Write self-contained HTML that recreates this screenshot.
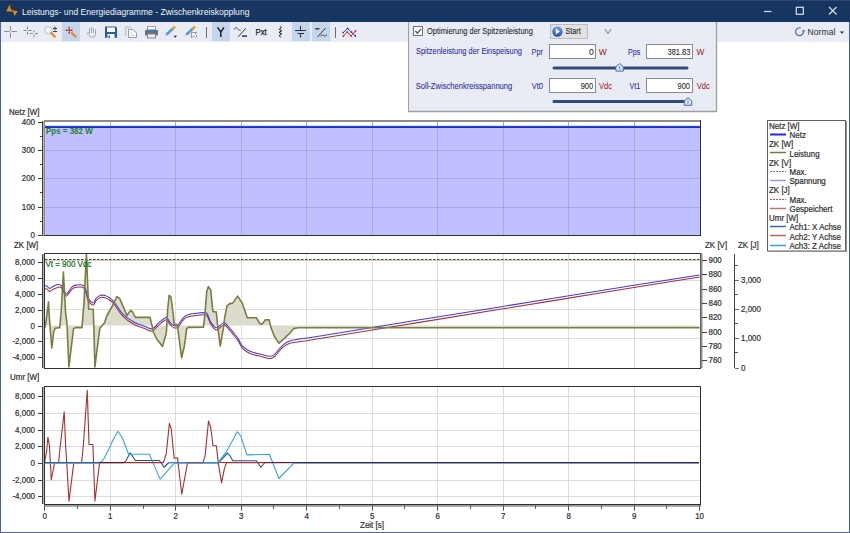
<!DOCTYPE html>
<html><head><meta charset="utf-8">
<style>
*{margin:0;padding:0}
html,body{width:850px;height:533px;overflow:hidden;background:#fff}
svg{position:absolute;left:0;top:0;display:block}
text{font-family:"Liberation Sans",sans-serif}
</style></head><body>
<svg width="850" height="533" viewBox="0 0 850 533">
<rect x="45" y="127" width="655" height="108" fill="#c0c0ff"/>
<line x1="110.5" y1="122" x2="110.5" y2="235" stroke="#a8a8e0" stroke-width="1"/>
<line x1="175.5" y1="122" x2="175.5" y2="235" stroke="#a8a8e0" stroke-width="1"/>
<line x1="241.5" y1="122" x2="241.5" y2="235" stroke="#a8a8e0" stroke-width="1"/>
<line x1="306.5" y1="122" x2="306.5" y2="235" stroke="#a8a8e0" stroke-width="1"/>
<line x1="372.5" y1="122" x2="372.5" y2="235" stroke="#a8a8e0" stroke-width="1"/>
<line x1="437.5" y1="122" x2="437.5" y2="235" stroke="#a8a8e0" stroke-width="1"/>
<line x1="503.5" y1="122" x2="503.5" y2="235" stroke="#a8a8e0" stroke-width="1"/>
<line x1="568.5" y1="122" x2="568.5" y2="235" stroke="#a8a8e0" stroke-width="1"/>
<line x1="634.5" y1="122" x2="634.5" y2="235" stroke="#a8a8e0" stroke-width="1"/>
<line x1="44" y1="207.5" x2="700" y2="207.5" stroke="#a8a8e0" stroke-width="1"/>
<line x1="44" y1="178.5" x2="700" y2="178.5" stroke="#a8a8e0" stroke-width="1"/>
<line x1="44" y1="150.5" x2="700" y2="150.5" stroke="#a8a8e0" stroke-width="1"/>
<line x1="110.5" y1="254" x2="110.5" y2="368" stroke="#dcdcdc" stroke-width="1"/>
<line x1="175.5" y1="254" x2="175.5" y2="368" stroke="#dcdcdc" stroke-width="1"/>
<line x1="241.5" y1="254" x2="241.5" y2="368" stroke="#dcdcdc" stroke-width="1"/>
<line x1="306.5" y1="254" x2="306.5" y2="368" stroke="#dcdcdc" stroke-width="1"/>
<line x1="372.5" y1="254" x2="372.5" y2="368" stroke="#dcdcdc" stroke-width="1"/>
<line x1="437.5" y1="254" x2="437.5" y2="368" stroke="#dcdcdc" stroke-width="1"/>
<line x1="503.5" y1="254" x2="503.5" y2="368" stroke="#dcdcdc" stroke-width="1"/>
<line x1="568.5" y1="254" x2="568.5" y2="368" stroke="#dcdcdc" stroke-width="1"/>
<line x1="634.5" y1="254" x2="634.5" y2="368" stroke="#dcdcdc" stroke-width="1"/>
<line x1="44" y1="338.5" x2="700" y2="338.5" stroke="#dcdcdc" stroke-width="1"/>
<line x1="44" y1="309.5" x2="700" y2="309.5" stroke="#dcdcdc" stroke-width="1"/>
<line x1="44" y1="280.5" x2="700" y2="280.5" stroke="#dcdcdc" stroke-width="1"/>
<line x1="110.5" y1="387" x2="110.5" y2="504" stroke="#dcdcdc" stroke-width="1"/>
<line x1="175.5" y1="387" x2="175.5" y2="504" stroke="#dcdcdc" stroke-width="1"/>
<line x1="241.5" y1="387" x2="241.5" y2="504" stroke="#dcdcdc" stroke-width="1"/>
<line x1="306.5" y1="387" x2="306.5" y2="504" stroke="#dcdcdc" stroke-width="1"/>
<line x1="372.5" y1="387" x2="372.5" y2="504" stroke="#dcdcdc" stroke-width="1"/>
<line x1="437.5" y1="387" x2="437.5" y2="504" stroke="#dcdcdc" stroke-width="1"/>
<line x1="503.5" y1="387" x2="503.5" y2="504" stroke="#dcdcdc" stroke-width="1"/>
<line x1="568.5" y1="387" x2="568.5" y2="504" stroke="#dcdcdc" stroke-width="1"/>
<line x1="634.5" y1="387" x2="634.5" y2="504" stroke="#dcdcdc" stroke-width="1"/>
<line x1="44" y1="496.5" x2="700" y2="496.5" stroke="#dcdcdc" stroke-width="1"/>
<line x1="44" y1="480.5" x2="700" y2="480.5" stroke="#dcdcdc" stroke-width="1"/>
<line x1="44" y1="446.5" x2="700" y2="446.5" stroke="#dcdcdc" stroke-width="1"/>
<line x1="44" y1="430.5" x2="700" y2="430.5" stroke="#dcdcdc" stroke-width="1"/>
<line x1="44" y1="413.5" x2="700" y2="413.5" stroke="#dcdcdc" stroke-width="1"/>
<line x1="44" y1="396.5" x2="700" y2="396.5" stroke="#dcdcdc" stroke-width="1"/>
<line x1="44" y1="127" x2="700" y2="127" stroke="#2424f0" stroke-width="2"/>
<line x1="45" y1="126" x2="700" y2="126" stroke="#40b840" stroke-width="0.9" stroke-dasharray="2,1.6"/>
<path d="M44.5,325.5 L44.60,328.30 L45.90,322.30 L48.10,305.30 L48.50,301.80 L49.20,315.80 L51.80,348.00 L53.80,331.50 L55.10,328.30 L59.70,327.60 L61.10,313.00 L63.40,272.10 L65.60,313.00 L66.90,322.30 L68.90,367.00 L73.50,328.90 L75.50,327.60 L82.00,327.60 L83.10,313.00 L84.00,302.60 L86.40,254.10 L88.40,302.00 L88.70,309.30 L93.20,309.20 L93.90,328.90 L94.90,367.00 L99.80,328.30 L104.50,322.80 L106.75,316.00 L112.40,305.90 L116.90,296.70 L119.70,298.60 L127.00,315.40 L130.40,310.40 L132.60,312.00 L135.40,317.40 L150.10,317.40 L151.80,324.60 L153.50,332.50 L156.90,339.25 L162.50,346.60 L166.40,332.50 L167.60,310.00 L169.20,295.20 L170.90,296.90 L173.10,313.75 L174.30,324.60 L177.10,324.60 L178.30,332.50 L181.60,357.80 L184.40,346.00 L186.70,328.60 L188.40,327.40 L203.40,327.30 L205.10,312.60 L206.75,291.25 L208.40,286.50 L210.70,290.10 L212.90,311.50 L216.30,312.10 L218.00,329.50 L220.25,346.00 L223.60,326.90 L224.75,317.10 L227.00,305.90 L229.80,303.60 L232.60,303.10 L237.70,296.10 L242.20,303.10 L247.30,317.70 L256.30,317.70 L260.20,323.90 L262.40,323.90 L265.30,319.90 L269.20,319.90 L270.70,326.90 L274.60,337.00 L279.10,343.20 L284.75,338.10 L290.40,332.50 L293.75,328.60 L298.25,327.80 L699.50,327.80 L699,325.5 Z" fill="#dcdccc"/>
<line x1="45" y1="260.5" x2="700" y2="260.5" stroke="#f0c0c0" stroke-width="1"/>
<line x1="45" y1="259.5" x2="700" y2="259.5" stroke="#1a5a1a" stroke-width="1.2" stroke-dasharray="2.5,1.5"/>
<path d="M44.50,289.20 C44.91,289.15 45.83,288.50 46.75,288.90 C47.67,289.30 48.58,291.26 49.60,291.40 C50.62,291.54 51.09,290.37 52.40,289.70 C53.71,289.03 55.39,288.13 56.90,287.70 C58.41,287.27 59.63,286.60 60.80,287.30 C61.97,288.00 62.43,290.02 63.40,291.60 C64.37,293.18 65.19,295.79 66.20,296.10 C67.21,296.41 67.88,294.61 69.00,293.30 C70.12,291.99 70.98,289.88 72.40,288.80 C73.82,287.72 75.08,287.57 76.90,287.30 C78.72,287.03 80.99,286.72 82.50,287.30 C84.01,287.88 84.29,288.21 85.30,290.50 C86.31,292.79 86.68,297.37 88.10,300.00 C89.52,302.63 91.78,304.99 93.20,305.10 C94.62,305.21 94.69,301.97 96.00,300.60 C97.31,299.23 98.88,298.00 100.50,297.50 C102.12,297.00 103.38,297.35 105.00,297.80 C106.62,298.25 107.88,298.88 109.50,300.00 C111.12,301.12 111.66,301.16 114.00,304.00 C116.34,306.84 118.94,312.16 122.50,315.80 C126.06,319.44 129.70,321.88 133.75,324.20 C137.80,326.52 141.66,327.48 145.00,328.70 C148.34,329.92 149.87,331.59 152.30,331.00 C154.73,330.41 156.00,327.42 158.50,325.40 C161.00,323.38 164.17,320.02 166.20,319.80 C168.23,319.58 168.45,322.80 169.80,324.20 C171.15,325.60 172.24,327.02 173.70,327.60 C175.16,328.18 176.27,328.68 177.90,327.40 C179.53,326.12 181.06,322.35 182.75,320.50 C184.44,318.65 184.86,318.02 187.30,317.10 C189.74,316.18 193.08,315.80 196.30,315.40 C199.52,315.00 203.18,314.70 205.20,314.90 C207.22,315.10 206.41,314.68 207.50,316.50 C208.59,318.32 209.56,322.57 211.25,325.00 C212.94,327.43 214.62,330.02 216.90,330.00 C219.18,329.98 221.67,324.92 223.90,324.90 C226.13,324.88 227.53,328.06 229.30,329.90 C231.07,331.74 232.13,333.08 233.75,335.10 C235.37,337.12 236.68,338.67 238.30,341.10 C239.92,343.53 240.54,346.33 242.75,348.60 C244.96,350.87 247.36,352.28 250.60,353.70 C253.84,355.12 257.31,355.64 260.75,356.50 C264.19,357.36 267.21,358.50 269.70,358.50 C272.19,358.50 272.30,358.48 274.60,356.50 C276.90,354.52 279.66,349.93 282.50,347.50 C285.34,345.07 286.35,344.17 290.40,343.00 C294.45,341.83 299.67,341.79 305.00,340.99 C310.33,340.20 302.90,341.35 320.00,338.57 C337.10,335.79 367.60,330.82 400.00,325.55 C432.40,320.28 464.00,315.15 500.00,309.30 C536.00,303.45 564.09,298.86 600.00,293.05 C635.91,287.24 681.59,279.89 699.50,277.00" fill="none" stroke="#a83030" stroke-width="1.05"/>
<path d="M44.50,286.20 C44.91,286.15 45.83,285.50 46.75,285.90 C47.67,286.30 48.58,288.26 49.60,288.40 C50.62,288.54 51.09,287.37 52.40,286.70 C53.71,286.03 55.39,284.99 56.90,284.70 C58.41,284.41 59.63,284.25 60.80,285.10 C61.97,285.95 62.43,287.82 63.40,289.40 C64.37,290.98 65.19,293.59 66.20,293.90 C67.21,294.21 67.88,292.41 69.00,291.10 C70.12,289.79 70.98,287.68 72.40,286.60 C73.82,285.52 75.08,285.37 76.90,285.10 C78.72,284.83 80.99,284.52 82.50,285.10 C84.01,285.68 84.29,286.01 85.30,288.30 C86.31,290.59 86.68,295.17 88.10,297.80 C89.52,300.43 91.78,302.79 93.20,302.90 C94.62,303.01 94.69,299.77 96.00,298.40 C97.31,297.03 98.88,295.80 100.50,295.30 C102.12,294.80 103.38,295.15 105.00,295.60 C106.62,296.05 107.88,296.68 109.50,297.80 C111.12,298.92 111.66,298.96 114.00,301.80 C116.34,304.64 118.94,309.96 122.50,313.60 C126.06,317.24 129.70,319.68 133.75,322.00 C137.80,324.32 141.66,325.28 145.00,326.50 C148.34,327.72 149.87,329.39 152.30,328.80 C154.73,328.21 156.00,325.22 158.50,323.20 C161.00,321.18 164.17,317.82 166.20,317.60 C168.23,317.38 168.45,320.60 169.80,322.00 C171.15,323.40 172.24,324.82 173.70,325.40 C175.16,325.98 176.27,326.48 177.90,325.20 C179.53,323.92 181.06,320.15 182.75,318.30 C184.44,316.45 184.86,315.82 187.30,314.90 C189.74,313.98 193.08,313.60 196.30,313.20 C199.52,312.80 203.18,312.50 205.20,312.70 C207.22,312.90 206.41,312.48 207.50,314.30 C208.59,316.12 209.56,320.37 211.25,322.80 C212.94,325.23 214.62,327.82 216.90,327.80 C219.18,327.78 221.67,322.72 223.90,322.70 C226.13,322.68 227.53,325.86 229.30,327.70 C231.07,329.54 232.13,330.88 233.75,332.90 C235.37,334.92 236.68,336.47 238.30,338.90 C239.92,341.33 240.54,344.13 242.75,346.40 C244.96,348.67 247.36,350.08 250.60,351.50 C253.84,352.92 257.31,353.44 260.75,354.30 C264.19,355.16 267.21,356.30 269.70,356.30 C272.19,356.30 272.30,356.28 274.60,354.30 C276.90,352.32 279.66,347.73 282.50,345.30 C285.34,342.87 286.35,342.06 290.40,340.80 C294.45,339.54 299.67,339.18 305.00,338.30 C310.33,337.42 302.90,338.65 320.00,335.90 C337.10,333.15 367.60,328.22 400.00,323.00 C432.40,317.78 464.00,312.70 500.00,306.90 C536.00,301.10 564.09,296.56 600.00,290.80 C635.91,285.04 681.59,277.76 699.50,274.90" fill="none" stroke="#3c3ce8" stroke-width="1.05"/>
<polyline points="44.60,328.30 45.90,322.30 48.10,305.30 48.50,301.80 49.20,315.80 51.80,348.00 53.80,331.50 55.10,328.30 59.70,327.60 61.10,313.00 63.40,272.10 65.60,313.00 66.90,322.30 68.90,367.00 73.50,328.90 75.50,327.60 82.00,327.60 83.10,313.00 84.00,302.60 86.40,254.10 88.40,302.00 88.70,309.30 93.20,309.20 93.90,328.90 94.90,367.00 99.80,328.30 104.50,322.80 106.75,316.00 112.40,305.90 116.90,296.70 119.70,298.60 127.00,315.40 130.40,310.40 132.60,312.00 135.40,317.40 150.10,317.40 151.80,324.60 153.50,332.50 156.90,339.25 162.50,346.60 166.40,332.50 167.60,310.00 169.20,295.20 170.90,296.90 173.10,313.75 174.30,324.60 177.10,324.60 178.30,332.50 181.60,357.80 184.40,346.00 186.70,328.60 188.40,327.40 203.40,327.30 205.10,312.60 206.75,291.25 208.40,286.50 210.70,290.10 212.90,311.50 216.30,312.10 218.00,329.50 220.25,346.00 223.60,326.90 224.75,317.10 227.00,305.90 229.80,303.60 232.60,303.10 237.70,296.10 242.20,303.10 247.30,317.70 256.30,317.70 260.20,323.90 262.40,323.90 265.30,319.90 269.20,319.90 270.70,326.90 274.60,337.00 279.10,343.20 284.75,338.10 290.40,332.50 293.75,328.60 298.25,327.80 699.50,327.80" fill="none" stroke="#7c7c42" stroke-width="1.6" stroke-linejoin="round"/>
<polyline points="44.50,462.60 124.10,462.60 125.75,461.10 130.25,452.85 135.30,460.50 159.50,460.50 164.00,467.25 168.50,462.75 218.60,462.60 227.60,453.00 230.00,455.80 232.80,460.70 256.40,460.70 260.90,467.25 264.90,462.50 699.00,462.60" fill="none" stroke="#24508c" stroke-width="1.1" stroke-linejoin="round"/>
<polyline points="44.50,462.60 46.50,452.00 47.90,437.20 49.50,446.00 51.25,479.75 54.60,462.90 58.60,462.60 60.25,446.00 64.20,411.90 65.65,446.00 66.40,457.25 69.00,501.10 73.75,462.90 81.60,462.60 83.30,446.00 87.25,390.30 89.00,444.50 92.90,444.50 94.90,501.10 99.60,462.60 163.40,462.60 166.25,453.75 169.40,423.40 171.30,429.00 174.10,458.25 177.50,457.70 181.75,494.10 187.60,462.50 202.90,462.60 205.10,455.90 208.50,421.00 210.75,427.75 213.00,445.75 216.40,445.75 218.20,462.60 221.55,482.90 224.25,469.40 226.50,462.60 699.00,462.60" fill="none" stroke="#a83030" stroke-width="1.1" stroke-linejoin="round"/>
<polyline points="44.50,463.30 98.50,463.30 101.50,461.80 104.10,458.40 108.60,449.40 113.00,440.00 117.90,431.25 122.40,438.00 128.60,454.30 149.40,454.30 160.10,479.10 174.10,463.30 217.50,463.30 226.50,451.40 237.30,431.80 240.70,435.75 246.90,454.90 269.40,454.30 278.90,478.50 293.60,463.30 699.00,463.30" fill="none" stroke="#3aa4e0" stroke-width="1.1" stroke-linejoin="round"/>
<line x1="98.5" y1="462.5" x2="124.1" y2="462.5" stroke="#5c1c2c" stroke-width="1"/>
<line x1="124.1" y1="462.5" x2="163.4" y2="462.5" stroke="#a83030" stroke-width="1"/>
<line x1="218.6" y1="462.5" x2="264.9" y2="462.5" stroke="#a83030" stroke-width="1"/>
<line x1="264.9" y1="462.5" x2="699.0" y2="462.5" stroke="#5a1c38" stroke-width="1"/>
<line x1="44" y1="121" x2="701" y2="121" stroke="#8c8c8c" stroke-width="2"/>
<line x1="44.5" y1="120" x2="44.5" y2="236" stroke="#8c8c8c" stroke-width="1"/>
<line x1="700.5" y1="120" x2="700.5" y2="236" stroke="#303030" stroke-width="1"/>
<line x1="44" y1="235.5" x2="701" y2="235.5" stroke="#303030" stroke-width="1"/>
<rect x="44.5" y="253.5" width="656" height="115" fill="none" stroke="#303030" stroke-width="1"/>
<rect x="44.5" y="386.5" width="656" height="118" fill="none" stroke="#303030" stroke-width="1"/>
<line x1="43.5" y1="121" x2="43.5" y2="236" stroke="#b4b4b4" stroke-width="1"/>
<line x1="42.5" y1="121" x2="42.5" y2="236" stroke="#404040" stroke-width="1"/>
<line x1="38" y1="235.5" x2="42" y2="235.5" stroke="#404040" stroke-width="1"/>
<line x1="38" y1="207.5" x2="42" y2="207.5" stroke="#404040" stroke-width="1"/>
<line x1="38" y1="178.5" x2="42" y2="178.5" stroke="#404040" stroke-width="1"/>
<line x1="38" y1="150.5" x2="42" y2="150.5" stroke="#404040" stroke-width="1"/>
<line x1="38" y1="122.5" x2="42" y2="122.5" stroke="#404040" stroke-width="1"/>
<line x1="40" y1="221.5" x2="42" y2="221.5" stroke="#404040" stroke-width="1"/>
<line x1="40" y1="192.5" x2="42" y2="192.5" stroke="#404040" stroke-width="1"/>
<line x1="40" y1="164.5" x2="42" y2="164.5" stroke="#404040" stroke-width="1"/>
<line x1="40" y1="136.5" x2="42" y2="136.5" stroke="#404040" stroke-width="1"/>
<line x1="43.5" y1="254" x2="43.5" y2="368" stroke="#b4b4b4" stroke-width="1"/>
<line x1="42.5" y1="254" x2="42.5" y2="368" stroke="#404040" stroke-width="1"/>
<line x1="38" y1="357.5" x2="42" y2="357.5" stroke="#404040" stroke-width="1"/>
<line x1="38" y1="341.5" x2="42" y2="341.5" stroke="#404040" stroke-width="1"/>
<line x1="38" y1="326.5" x2="42" y2="326.5" stroke="#404040" stroke-width="1"/>
<line x1="38" y1="310.5" x2="42" y2="310.5" stroke="#404040" stroke-width="1"/>
<line x1="38" y1="294.5" x2="42" y2="294.5" stroke="#404040" stroke-width="1"/>
<line x1="38" y1="278.5" x2="42" y2="278.5" stroke="#404040" stroke-width="1"/>
<line x1="38" y1="262.5" x2="42" y2="262.5" stroke="#404040" stroke-width="1"/>
<line x1="43.5" y1="387" x2="43.5" y2="504" stroke="#b4b4b4" stroke-width="1"/>
<line x1="42.5" y1="387" x2="42.5" y2="504" stroke="#404040" stroke-width="1"/>
<line x1="38" y1="496.5" x2="42" y2="496.5" stroke="#404040" stroke-width="1"/>
<line x1="38" y1="480.5" x2="42" y2="480.5" stroke="#404040" stroke-width="1"/>
<line x1="38" y1="463.5" x2="42" y2="463.5" stroke="#404040" stroke-width="1"/>
<line x1="38" y1="446.5" x2="42" y2="446.5" stroke="#404040" stroke-width="1"/>
<line x1="38" y1="430.5" x2="42" y2="430.5" stroke="#404040" stroke-width="1"/>
<line x1="38" y1="413.5" x2="42" y2="413.5" stroke="#404040" stroke-width="1"/>
<line x1="38" y1="396.5" x2="42" y2="396.5" stroke="#404040" stroke-width="1"/>
<line x1="701.5" y1="253" x2="701.5" y2="368" stroke="#909090" stroke-width="2"/>
<line x1="702" y1="360.5" x2="707" y2="360.5" stroke="#404040" stroke-width="1"/>
<line x1="702" y1="346.5" x2="707" y2="346.5" stroke="#404040" stroke-width="1"/>
<line x1="702" y1="332.5" x2="707" y2="332.5" stroke="#404040" stroke-width="1"/>
<line x1="702" y1="317.5" x2="707" y2="317.5" stroke="#404040" stroke-width="1"/>
<line x1="702" y1="303.5" x2="707" y2="303.5" stroke="#404040" stroke-width="1"/>
<line x1="702" y1="289.5" x2="707" y2="289.5" stroke="#404040" stroke-width="1"/>
<line x1="702" y1="274.5" x2="707" y2="274.5" stroke="#404040" stroke-width="1"/>
<line x1="702" y1="260.5" x2="707" y2="260.5" stroke="#404040" stroke-width="1"/>
<line x1="734.5" y1="254" x2="734.5" y2="368" stroke="#404040" stroke-width="1"/>
<line x1="735" y1="368.5" x2="739" y2="368.5" stroke="#707070" stroke-width="1"/>
<line x1="735" y1="338.5" x2="739" y2="338.5" stroke="#707070" stroke-width="1"/>
<line x1="735" y1="309.5" x2="739" y2="309.5" stroke="#707070" stroke-width="1"/>
<line x1="735" y1="280.5" x2="739" y2="280.5" stroke="#707070" stroke-width="1"/>
<line x1="735" y1="352.5" x2="738" y2="352.5" stroke="#505050" stroke-width="1"/>
<line x1="735" y1="323.5" x2="738" y2="323.5" stroke="#505050" stroke-width="1"/>
<line x1="735" y1="294.5" x2="738" y2="294.5" stroke="#505050" stroke-width="1"/>
<line x1="735" y1="265.5" x2="738" y2="265.5" stroke="#505050" stroke-width="1"/>
<line x1="44" y1="505.9" x2="701" y2="505.9" stroke="#9a9a9a" stroke-width="1.8"/>
<line x1="44.5" y1="505.5" x2="44.5" y2="510.7" stroke="#505050" stroke-width="1"/>
<line x1="110.5" y1="505.5" x2="110.5" y2="510.7" stroke="#505050" stroke-width="1"/>
<line x1="175.5" y1="505.5" x2="175.5" y2="510.7" stroke="#505050" stroke-width="1"/>
<line x1="241.5" y1="505.5" x2="241.5" y2="510.7" stroke="#505050" stroke-width="1"/>
<line x1="306.5" y1="505.5" x2="306.5" y2="510.7" stroke="#505050" stroke-width="1"/>
<line x1="372.5" y1="505.5" x2="372.5" y2="510.7" stroke="#505050" stroke-width="1"/>
<line x1="437.5" y1="505.5" x2="437.5" y2="510.7" stroke="#505050" stroke-width="1"/>
<line x1="503.5" y1="505.5" x2="503.5" y2="510.7" stroke="#505050" stroke-width="1"/>
<line x1="568.5" y1="505.5" x2="568.5" y2="510.7" stroke="#505050" stroke-width="1"/>
<line x1="634.5" y1="505.5" x2="634.5" y2="510.7" stroke="#505050" stroke-width="1"/>
<line x1="699.5" y1="505.5" x2="699.5" y2="510.7" stroke="#505050" stroke-width="1"/>
<line x1="77.5" y1="505.5" x2="77.5" y2="508.8" stroke="#505050" stroke-width="1"/>
<line x1="143.5" y1="505.5" x2="143.5" y2="508.8" stroke="#505050" stroke-width="1"/>
<line x1="208.5" y1="505.5" x2="208.5" y2="508.8" stroke="#505050" stroke-width="1"/>
<line x1="273.5" y1="505.5" x2="273.5" y2="508.8" stroke="#505050" stroke-width="1"/>
<line x1="339.5" y1="505.5" x2="339.5" y2="508.8" stroke="#505050" stroke-width="1"/>
<line x1="404.5" y1="505.5" x2="404.5" y2="508.8" stroke="#505050" stroke-width="1"/>
<line x1="470.5" y1="505.5" x2="470.5" y2="508.8" stroke="#505050" stroke-width="1"/>
<line x1="535.5" y1="505.5" x2="535.5" y2="508.8" stroke="#505050" stroke-width="1"/>
<line x1="601.5" y1="505.5" x2="601.5" y2="508.8" stroke="#505050" stroke-width="1"/>
<line x1="666.5" y1="505.5" x2="666.5" y2="508.8" stroke="#505050" stroke-width="1"/>
<rect x="767.5" y="120.5" width="78" height="130.5" fill="#ffffff" stroke="#606060" stroke-width="1"/>
<line x1="846.5" y1="121" x2="846.5" y2="252" stroke="#909090" stroke-width="1"/>
<line x1="768" y1="251.5" x2="847" y2="251.5" stroke="#909090" stroke-width="1"/>
<line x1="770" y1="134.5" x2="786" y2="134.5" stroke="#2020ff" stroke-width="2"/>
<line x1="770" y1="152.5" x2="786" y2="152.5" stroke="#7a7a40" stroke-width="1.5"/>
<line x1="770" y1="171.5" x2="786" y2="171.5" stroke="#6a6ae8" stroke-width="1" stroke-dasharray="2,1"/>
<line x1="770" y1="180.5" x2="786" y2="180.5" stroke="#9a9ae8" stroke-width="1.5"/>
<line x1="770" y1="199.5" x2="786" y2="199.5" stroke="#c05050" stroke-width="1" stroke-dasharray="2,1"/>
<line x1="770" y1="208.5" x2="786" y2="208.5" stroke="#c07070" stroke-width="1.5"/>
<line x1="770" y1="226.5" x2="786" y2="226.5" stroke="#3a68a8" stroke-width="1.5"/>
<line x1="770" y1="235.5" x2="786" y2="235.5" stroke="#c06060" stroke-width="1.5"/>
<line x1="770" y1="245.5" x2="786" y2="245.5" stroke="#3aa0dc" stroke-width="1.5"/>
<text transform="translate(9.00,114.80) scale(0.96,1)" text-anchor="start" fill="#303030" font-size="8.3" font-weight="normal" stroke="#303030" stroke-width="0.22" >Netz [W]</text>
<text transform="translate(35.00,238.00) scale(0.96,1)" text-anchor="end" fill="#303030" font-size="8.3" font-weight="normal" stroke="#303030" stroke-width="0.22" >0</text>
<text transform="translate(35.00,209.65) scale(0.96,1)" text-anchor="end" fill="#303030" font-size="8.3" font-weight="normal" stroke="#303030" stroke-width="0.22" >100</text>
<text transform="translate(35.00,181.30) scale(0.96,1)" text-anchor="end" fill="#303030" font-size="8.3" font-weight="normal" stroke="#303030" stroke-width="0.22" >200</text>
<text transform="translate(35.00,152.95) scale(0.96,1)" text-anchor="end" fill="#303030" font-size="8.3" font-weight="normal" stroke="#303030" stroke-width="0.22" >300</text>
<text transform="translate(35.00,124.60) scale(0.96,1)" text-anchor="end" fill="#303030" font-size="8.3" font-weight="normal" stroke="#303030" stroke-width="0.22" >400</text>
<text transform="translate(14.00,248.00) scale(0.96,1)" text-anchor="start" fill="#303030" font-size="8.3" font-weight="normal" stroke="#303030" stroke-width="0.22" >ZK [W]</text>
<text transform="translate(35.00,360.30) scale(0.96,1)" text-anchor="end" fill="#303030" font-size="8.3" font-weight="normal" stroke="#303030" stroke-width="0.22" >-4,000</text>
<text transform="translate(35.00,344.40) scale(0.96,1)" text-anchor="end" fill="#303030" font-size="8.3" font-weight="normal" stroke="#303030" stroke-width="0.22" >-2,000</text>
<text transform="translate(35.00,328.50) scale(0.96,1)" text-anchor="end" fill="#303030" font-size="8.3" font-weight="normal" stroke="#303030" stroke-width="0.22" >0</text>
<text transform="translate(35.00,312.60) scale(0.96,1)" text-anchor="end" fill="#303030" font-size="8.3" font-weight="normal" stroke="#303030" stroke-width="0.22" >2,000</text>
<text transform="translate(35.00,296.70) scale(0.96,1)" text-anchor="end" fill="#303030" font-size="8.3" font-weight="normal" stroke="#303030" stroke-width="0.22" >4,000</text>
<text transform="translate(35.00,280.80) scale(0.96,1)" text-anchor="end" fill="#303030" font-size="8.3" font-weight="normal" stroke="#303030" stroke-width="0.22" >6,000</text>
<text transform="translate(35.00,264.90) scale(0.96,1)" text-anchor="end" fill="#303030" font-size="8.3" font-weight="normal" stroke="#303030" stroke-width="0.22" >8,000</text>
<text transform="translate(705.00,247.80) scale(0.96,1)" text-anchor="start" fill="#303030" font-size="8.3" font-weight="normal" stroke="#303030" stroke-width="0.22" >ZK [V]</text>
<text transform="translate(738.00,247.80) scale(0.96,1)" text-anchor="start" fill="#303030" font-size="8.3" font-weight="normal" stroke="#303030" stroke-width="0.22" >ZK [J]</text>
<text transform="translate(708.50,363.10) scale(0.96,1)" text-anchor="start" fill="#303030" font-size="8.3" font-weight="normal" stroke="#303030" stroke-width="0.22" >760</text>
<text transform="translate(708.50,348.80) scale(0.96,1)" text-anchor="start" fill="#303030" font-size="8.3" font-weight="normal" stroke="#303030" stroke-width="0.22" >780</text>
<text transform="translate(708.50,334.50) scale(0.96,1)" text-anchor="start" fill="#303030" font-size="8.3" font-weight="normal" stroke="#303030" stroke-width="0.22" >800</text>
<text transform="translate(708.50,320.20) scale(0.96,1)" text-anchor="start" fill="#303030" font-size="8.3" font-weight="normal" stroke="#303030" stroke-width="0.22" >820</text>
<text transform="translate(708.50,305.90) scale(0.96,1)" text-anchor="start" fill="#303030" font-size="8.3" font-weight="normal" stroke="#303030" stroke-width="0.22" >840</text>
<text transform="translate(708.50,291.60) scale(0.96,1)" text-anchor="start" fill="#303030" font-size="8.3" font-weight="normal" stroke="#303030" stroke-width="0.22" >860</text>
<text transform="translate(708.50,277.30) scale(0.96,1)" text-anchor="start" fill="#303030" font-size="8.3" font-weight="normal" stroke="#303030" stroke-width="0.22" >880</text>
<text transform="translate(708.50,263.00) scale(0.96,1)" text-anchor="start" fill="#303030" font-size="8.3" font-weight="normal" stroke="#303030" stroke-width="0.22" >900</text>
<text transform="translate(741.00,370.50) scale(0.96,1)" text-anchor="start" fill="#303030" font-size="8.3" font-weight="normal" stroke="#303030" stroke-width="0.22" >0</text>
<text transform="translate(741.00,341.40) scale(0.96,1)" text-anchor="start" fill="#303030" font-size="8.3" font-weight="normal" stroke="#303030" stroke-width="0.22" >1,000</text>
<text transform="translate(741.00,312.30) scale(0.96,1)" text-anchor="start" fill="#303030" font-size="8.3" font-weight="normal" stroke="#303030" stroke-width="0.22" >2,000</text>
<text transform="translate(741.00,283.20) scale(0.96,1)" text-anchor="start" fill="#303030" font-size="8.3" font-weight="normal" stroke="#303030" stroke-width="0.22" >3,000</text>
<text transform="translate(10.00,380.30) scale(0.96,1)" text-anchor="start" fill="#303030" font-size="8.3" font-weight="normal" stroke="#303030" stroke-width="0.22" >Umr [W]</text>
<text transform="translate(35.00,499.30) scale(0.96,1)" text-anchor="end" fill="#303030" font-size="8.3" font-weight="normal" stroke="#303030" stroke-width="0.22" >-4,000</text>
<text transform="translate(35.00,482.65) scale(0.96,1)" text-anchor="end" fill="#303030" font-size="8.3" font-weight="normal" stroke="#303030" stroke-width="0.22" >-2,000</text>
<text transform="translate(35.00,466.00) scale(0.96,1)" text-anchor="end" fill="#303030" font-size="8.3" font-weight="normal" stroke="#303030" stroke-width="0.22" >0</text>
<text transform="translate(35.00,449.35) scale(0.96,1)" text-anchor="end" fill="#303030" font-size="8.3" font-weight="normal" stroke="#303030" stroke-width="0.22" >2,000</text>
<text transform="translate(35.00,432.70) scale(0.96,1)" text-anchor="end" fill="#303030" font-size="8.3" font-weight="normal" stroke="#303030" stroke-width="0.22" >4,000</text>
<text transform="translate(35.00,416.05) scale(0.96,1)" text-anchor="end" fill="#303030" font-size="8.3" font-weight="normal" stroke="#303030" stroke-width="0.22" >6,000</text>
<text transform="translate(35.00,399.40) scale(0.96,1)" text-anchor="end" fill="#303030" font-size="8.3" font-weight="normal" stroke="#303030" stroke-width="0.22" >8,000</text>
<text transform="translate(44.80,518.80) scale(0.96,1)" text-anchor="middle" fill="#303030" font-size="8.3" font-weight="normal" stroke="#303030" stroke-width="0.22" >0</text>
<text transform="translate(110.28,518.80) scale(0.96,1)" text-anchor="middle" fill="#303030" font-size="8.3" font-weight="normal" stroke="#303030" stroke-width="0.22" >1</text>
<text transform="translate(175.76,518.80) scale(0.96,1)" text-anchor="middle" fill="#303030" font-size="8.3" font-weight="normal" stroke="#303030" stroke-width="0.22" >2</text>
<text transform="translate(241.24,518.80) scale(0.96,1)" text-anchor="middle" fill="#303030" font-size="8.3" font-weight="normal" stroke="#303030" stroke-width="0.22" >3</text>
<text transform="translate(306.72,518.80) scale(0.96,1)" text-anchor="middle" fill="#303030" font-size="8.3" font-weight="normal" stroke="#303030" stroke-width="0.22" >4</text>
<text transform="translate(372.20,518.80) scale(0.96,1)" text-anchor="middle" fill="#303030" font-size="8.3" font-weight="normal" stroke="#303030" stroke-width="0.22" >5</text>
<text transform="translate(437.68,518.80) scale(0.96,1)" text-anchor="middle" fill="#303030" font-size="8.3" font-weight="normal" stroke="#303030" stroke-width="0.22" >6</text>
<text transform="translate(503.16,518.80) scale(0.96,1)" text-anchor="middle" fill="#303030" font-size="8.3" font-weight="normal" stroke="#303030" stroke-width="0.22" >7</text>
<text transform="translate(568.64,518.80) scale(0.96,1)" text-anchor="middle" fill="#303030" font-size="8.3" font-weight="normal" stroke="#303030" stroke-width="0.22" >8</text>
<text transform="translate(634.12,518.80) scale(0.96,1)" text-anchor="middle" fill="#303030" font-size="8.3" font-weight="normal" stroke="#303030" stroke-width="0.22" >9</text>
<text transform="translate(699.60,518.80) scale(0.96,1)" text-anchor="middle" fill="#303030" font-size="8.3" font-weight="normal" stroke="#303030" stroke-width="0.22" >10</text>
<text transform="translate(372.00,528.30) scale(0.96,1)" text-anchor="middle" fill="#303030" font-size="8.3" font-weight="normal" stroke="#303030" stroke-width="0.22" >Zeit [s]</text>
<text transform="translate(46.00,134.00) scale(0.96,1)" text-anchor="start" fill="#1f821f" font-size="8.3" font-weight="bold" >Pps = 382 W</text>
<text transform="translate(45.50,266.80) scale(0.96,1)" text-anchor="start" fill="#06701e" font-size="8.3" font-weight="normal" stroke="#06701e" stroke-width="0.22" >Vt = 900 Vdc</text>
<text transform="translate(769.00,128.90) scale(0.96,1)" text-anchor="start" fill="#303030" font-size="8.3" font-weight="normal" stroke="#303030" stroke-width="0.22" >Netz [W]</text>
<text transform="translate(789.50,138.12) scale(0.96,1)" text-anchor="start" fill="#303030" font-size="8.3" font-weight="normal" stroke="#303030" stroke-width="0.22" >Netz</text>
<text transform="translate(769.00,147.34) scale(0.96,1)" text-anchor="start" fill="#303030" font-size="8.3" font-weight="normal" stroke="#303030" stroke-width="0.22" >ZK [W]</text>
<text transform="translate(789.50,156.56) scale(0.96,1)" text-anchor="start" fill="#303030" font-size="8.3" font-weight="normal" stroke="#303030" stroke-width="0.22" >Leistung</text>
<text transform="translate(769.00,165.78) scale(0.96,1)" text-anchor="start" fill="#303030" font-size="8.3" font-weight="normal" stroke="#303030" stroke-width="0.22" >ZK [V]</text>
<text transform="translate(789.50,175.00) scale(0.96,1)" text-anchor="start" fill="#303030" font-size="8.3" font-weight="normal" stroke="#303030" stroke-width="0.22" >Max.</text>
<text transform="translate(789.50,184.22) scale(0.96,1)" text-anchor="start" fill="#303030" font-size="8.3" font-weight="normal" stroke="#303030" stroke-width="0.22" >Spannung</text>
<text transform="translate(769.00,193.44) scale(0.96,1)" text-anchor="start" fill="#303030" font-size="8.3" font-weight="normal" stroke="#303030" stroke-width="0.22" >ZK [J]</text>
<text transform="translate(789.50,202.66) scale(0.96,1)" text-anchor="start" fill="#303030" font-size="8.3" font-weight="normal" stroke="#303030" stroke-width="0.22" >Max.</text>
<text transform="translate(789.50,211.88) scale(0.96,1)" text-anchor="start" fill="#303030" font-size="8.3" font-weight="normal" stroke="#303030" stroke-width="0.22" >Gespeichert</text>
<text transform="translate(769.00,221.10) scale(0.96,1)" text-anchor="start" fill="#303030" font-size="8.3" font-weight="normal" stroke="#303030" stroke-width="0.22" >Umr [W]</text>
<text transform="translate(789.50,230.32) scale(0.96,1)" text-anchor="start" fill="#303030" font-size="8.3" font-weight="normal" stroke="#303030" stroke-width="0.22" >Ach1: X Achse</text>
<text transform="translate(789.50,239.54) scale(0.96,1)" text-anchor="start" fill="#303030" font-size="8.3" font-weight="normal" stroke="#303030" stroke-width="0.22" >Ach2: Y Achse</text>
<text transform="translate(789.50,248.76) scale(0.96,1)" text-anchor="start" fill="#303030" font-size="8.3" font-weight="normal" stroke="#303030" stroke-width="0.22" >Ach3: Z Achse</text>
<rect x="0" y="0" width="850" height="22" fill="#163560"/>
<rect x="0" y="0" width="850" height="1" fill="#2f4670"/>
<path d="M9.5,5 C10.3,5 10.5,6.5 10.3,7.8 L11,9.6 L13.2,10.4 L17.8,10.9 L14.5,15.9 L13,11.4 L6.2,11.4 Z" fill="#e08c12"/>
<text x="22" y="14.5" font-size="9.3" fill="#f2f5fa" textLength="227.4" lengthAdjust="spacingAndGlyphs">Leistungs- und Energiediagramme - Zwischenkreiskopplung</text>
<line x1="764" y1="11.5" x2="771.5" y2="11.5" stroke="#dde2ea" stroke-width="1.2"/>
<rect x="796.3" y="7.3" width="7" height="7" fill="none" stroke="#dde2ea" stroke-width="1.2"/>
<path d="M829,7 L836.5,14.5 M836.5,7 L829,14.5" stroke="#dde2ea" stroke-width="1.1"/>
<rect x="0" y="22" width="850" height="20" fill="#e9ecf5"/>
<rect x="62" y="22" width="18" height="19" fill="#c5d5ec"/>
<rect x="212" y="22" width="18" height="19" fill="#c5d5ec"/>
<rect x="292" y="22" width="18" height="19" fill="#c5d5ec"/>
<rect x="312" y="22" width="18" height="19" fill="#c5d5ec"/>
<path d="M4,31.5 H9.5 M11.5,31.5 H17 M10.5,26 V31 M10.5,32.5 V38" stroke="#909090" stroke-width="1"/>
<path d="M23.5,30.5 H26.5 M28.5,30.5 H31.5 M27.5,26.5 V29.5 M27.5,31.5 V34.5" stroke="#808080" stroke-width="1"/>
<path d="M30,33.5 H33 M35,33.5 H38 M34,30 V32.5 M34,34.5 V37.5" stroke="#909090" stroke-width="1"/>
<circle cx="48.4" cy="30.3" r="3.7" fill="#f4f4f4" stroke="#a8c0e0" stroke-width="1"/>
<line x1="51" y1="33" x2="54.8" y2="36.8" stroke="#e88a20" stroke-width="2.2" stroke-linecap="round"/>
<path d="M53,28.5 H57 M55,26.5 V30.5 M53,31.5 H57" stroke="#404040" stroke-width="1"/>
<circle cx="69.2" cy="30.3" r="3.7" fill="#f4f4f4" stroke="#a8c0e0" stroke-width="1"/>
<line x1="71.8" y1="33" x2="75.6" y2="36.8" stroke="#e88a20" stroke-width="2.2" stroke-linecap="round"/>
<path d="M66.3,30.3 H72.1 M69.2,27.6 V33" stroke="#a82020" stroke-width="1"/>
<path d="M65.6,30.3 L67.3,29 L67.3,31.6Z M72.8,30.3 L71.1,29 L71.1,31.6Z M69.2,26.8 L68,28.4 L70.4,28.4Z M69.2,33.8 L68,32.2 L70.4,32.2Z" fill="#a82020"/>
<path d="M87,33.5 L89,35.5 L90.5,37 L94.5,37 L95.5,34 L95.5,30 M89.5,34.5 L89.5,28 M91.5,33 L91.5,27 M93.5,33 L93.5,28 M95.5,33 L95.5,29.5 M87,33.5 L88.3,32.5 L89.5,33.5" fill="none" stroke="#a0a0a0" stroke-width="0.9"/>
<path d="M105,26.5 H116 L117,27.5 V37.8 H105Z" fill="#2c5aa8"/>
<rect x="107" y="27.5" width="8" height="4.5" fill="#ffffff"/>
<rect x="107.5" y="34" width="7" height="3.8" fill="#ffffff"/>
<rect x="108.5" y="35.5" width="1.5" height="2.3" fill="#2c5aa8"/>
<path d="M125.7,27 H130 L131.5,28.5 M125.7,27 V36" fill="none" stroke="#b8b8b8" stroke-width="1"/>
<path d="M128.5,29.5 H133 L136.5,33 V37.5 H128.5Z" fill="#ffffff" stroke="#9a9a9a" stroke-width="1"/>
<path d="M130.5,33 H132 M130.5,35.3 H134.5" stroke="#b0b8d0" stroke-width="0.8"/>
<rect x="147.5" y="26.5" width="8" height="4" fill="#ffffff" stroke="#a0a0a0" stroke-width="1"/>
<rect x="145" y="30" width="13" height="5.5" rx="1" fill="#6e6e6e"/>
<rect x="147" y="29.5" width="9" height="2" fill="#3a78c0"/>
<rect x="147.5" y="34" width="8" height="4" fill="#e4eef8" stroke="#8a8a8a" stroke-width="1"/>
<line x1="166.5" y1="34.5" x2="173" y2="28.5" stroke="#4a9ee0" stroke-width="2.6"/>
<line x1="173" y1="28.5" x2="174.3" y2="27.3" stroke="#e8a020" stroke-width="2.6" stroke-linecap="round"/>
<path d="M165.2,35.8 L166,33.6 L167.4,35Z" fill="#a0a0a0"/>
<path d="M173.5,35.8 H177 L175.25,37.8Z" fill="#202020"/>
<line x1="186.5" y1="34.5" x2="193" y2="28.5" stroke="#4a9ee0" stroke-width="2.6"/>
<line x1="193" y1="28.5" x2="194.3" y2="27.3" stroke="#e8a020" stroke-width="2.6" stroke-linecap="round"/>
<path d="M185.2,35.8 L186,33.6 L187.4,35Z" fill="#a0a0a0"/>
<path d="M191.5,32.5 H196.5 L195.3,34.2 L197,36 L195.5,37.5 L193.8,35.8 L191.5,37.5Z" fill="#ffffff" stroke="#808080" stroke-width="0.8"/>
<line x1="206.5" y1="27" x2="206.5" y2="38" stroke="#6a6a6a" stroke-width="1"/>
<line x1="335.5" y1="27" x2="335.5" y2="38" stroke="#6a6a6a" stroke-width="1"/>
<path d="M217.5,27.3 L220.8,32 L224,27.3 M220.8,32 V37" fill="none" stroke="#1a1a1a" stroke-width="1.4"/>
<path d="M234.2,29.6 L236,27.3 L238.3,29.6 L240.6,30.6" fill="none" stroke="#505050" stroke-width="1"/>
<line x1="238.3" y1="36.8" x2="245.6" y2="28.4" stroke="#404040" stroke-width="1"/>
<rect x="242" y="35.2" width="5" height="1.8" fill="#505050"/>
<text x="255.5" y="35.1" font-size="9" fill="#1a1a1a" stroke="#1a1a1a" stroke-width="0.25" textLength="11.3" lengthAdjust="spacingAndGlyphs">Pxt</text>
<path d="M280.3,26.3 L281.3,27.8 L279.2,29.3 L281.8,30.8 L279,32.3 L281.8,33.8 L279.2,35.3 L280.6,37.5" fill="none" stroke="#202020" stroke-width="1"/>
<path d="M295,30.5 H306 M297.5,33.5 H304 M300.5,26.2 V30.5 M300.5,33.5 V37.5" stroke="#303030" stroke-width="1.1"/>
<rect x="315.2" y="28" width="4.2" height="1.5" fill="#404040"/>
<line x1="317.5" y1="37" x2="325.6" y2="28" stroke="#404040" stroke-width="1"/>
<path d="M320.5,36 Q322,34 323.5,35.5 Q325,37 327,34.5" fill="none" stroke="#505050" stroke-width="1"/>
<polyline points="343.2,32.6 347.6,28.4 351.5,32.2 355.3,36" fill="none" stroke="#2c3aa8" stroke-width="1"/>
<polyline points="343.4,36 347.2,31.9 351.1,36 355.6,30.9" fill="none" stroke="#e02828" stroke-width="1"/>
<circle cx="343.2" cy="32.6" r="0.9" fill="#2c3aa8"/>
<circle cx="347.6" cy="28.4" r="0.9" fill="#2c3aa8"/>
<circle cx="351.5" cy="32.2" r="0.9" fill="#2c3aa8"/>
<circle cx="355.3" cy="36" r="0.9" fill="#2c3aa8"/>
<circle cx="343.4" cy="36" r="0.9" fill="#e02828"/>
<circle cx="347.2" cy="31.9" r="0.9" fill="#e02828"/>
<circle cx="351.1" cy="36" r="0.9" fill="#e02828"/>
<circle cx="355.6" cy="30.9" r="0.9" fill="#e02828"/>
<path d="M800.8,28 A3.9,3.9 0 1 0 803.4,32" fill="none" stroke="#4a6a9a" stroke-width="1.2"/>
<path d="M801.8,30.2 L805.2,30.2 L803.5,32.8Z" fill="#4a6a9a"/>
<text x="807.6" y="35.2" font-size="9" fill="#303030" textLength="27.8" lengthAdjust="spacingAndGlyphs">Normal</text>
<path d="M840,31.5 H844 L842,33.7Z" fill="#202020"/>
<rect x="408" y="22" width="309" height="90" fill="#e9ecf5"/>
<line x1="408.5" y1="22" x2="408.5" y2="112" stroke="#a0a0a0" stroke-width="1"/>
<line x1="716.5" y1="22" x2="716.5" y2="112" stroke="#a0a0a0" stroke-width="1.3"/>
<line x1="408" y1="111.5" x2="717" y2="111.5" stroke="#a0a0a0" stroke-width="1.3"/>
<rect x="413.5" y="26.5" width="9" height="9" fill="#ffffff" stroke="#707070" stroke-width="1"/>
<path d="M415.3,31 L417.5,33.3 L421,28.8" fill="none" stroke="#555555" stroke-width="1.3"/>
<text x="427.0" y="33.9" font-size="8.7" fill="#1e1e1e" stroke="#1e1e1e" stroke-width="0.08" textLength="105.8" lengthAdjust="spacingAndGlyphs">Optimierung der Spitzenleistung</text>
<rect x="550.5" y="24.5" width="37" height="14" fill="#e1e1e1" stroke="#bdbdbd" stroke-width="1"/>
<defs><linearGradient id="pg" x1="0" y1="0" x2="0" y2="1"><stop offset="0" stop-color="#7aa4ec"/><stop offset="1" stop-color="#2248a8"/></linearGradient></defs>
<circle cx="557.4" cy="31.5" r="5.2" fill="url(#pg)"/>
<path d="M555.8,28.6 L560,31.5 L555.8,34.4Z" fill="#ffffff"/>
<text x="565.5" y="34.4" font-size="8.7" fill="#1e1e1e" stroke="#1e1e1e" stroke-width="0.08" textLength="15.2" lengthAdjust="spacingAndGlyphs">Start</text>
<path d="M605,29 L608,33.8 L611,29" fill="none" stroke="#707070" stroke-width="0.9"/>
<text x="416.0" y="54.1" font-size="8.7" fill="#2e2ea0" stroke="#2e2ea0" stroke-width="0.08" textLength="106.0" lengthAdjust="spacingAndGlyphs">Spitzenleistung der Einspeisung</text>
<text x="531.6" y="55.0" font-size="8.7" fill="#2e2ea0" stroke="#2e2ea0" stroke-width="0.08" textLength="11.4" lengthAdjust="spacingAndGlyphs">Ppr</text>
<text x="628.0" y="55.2" font-size="8.7" fill="#2e2ea0" stroke="#2e2ea0" stroke-width="0.08" textLength="12.2" lengthAdjust="spacingAndGlyphs">Pps</text>
<text x="415.7" y="88.6" font-size="8.7" fill="#2e2ea0" stroke="#2e2ea0" stroke-width="0.08" textLength="96.6" lengthAdjust="spacingAndGlyphs">Soll-Zwischenkreisspannung</text>
<text x="531.8" y="88.9" font-size="8.7" fill="#2e2ea0" stroke="#2e2ea0" stroke-width="0.08" textLength="11.2" lengthAdjust="spacingAndGlyphs">Vt0</text>
<text x="629.4" y="88.7" font-size="8.7" fill="#2e2ea0" stroke="#2e2ea0" stroke-width="0.08" textLength="10.8" lengthAdjust="spacingAndGlyphs">Vt1</text>
<rect x="549.5" y="44.5" width="46" height="14" fill="#ffffff" stroke="#8a8a8a" stroke-width="1"/>
<rect x="646.5" y="44.5" width="46" height="14" fill="#ffffff" stroke="#8a8a8a" stroke-width="1"/>
<rect x="549.5" y="78.5" width="46" height="14" fill="#ffffff" stroke="#8a8a8a" stroke-width="1"/>
<rect x="646.5" y="78.5" width="46" height="14" fill="#ffffff" stroke="#8a8a8a" stroke-width="1"/>
<text x="589.0" y="55.2" font-size="9.4" fill="#1e1e1e" stroke="#1e1e1e" stroke-width="0.08" textLength="4.8" lengthAdjust="spacingAndGlyphs">0</text>
<text x="667.5" y="55.2" font-size="9.4" fill="#1e1e1e" stroke="#1e1e1e" stroke-width="0.08" textLength="22.9" lengthAdjust="spacingAndGlyphs">381.83</text>
<text x="580.7" y="88.9" font-size="9.4" fill="#1e1e1e" stroke="#1e1e1e" stroke-width="0.08" textLength="12.5" lengthAdjust="spacingAndGlyphs">900</text>
<text x="677.5" y="88.9" font-size="9.4" fill="#1e1e1e" stroke="#1e1e1e" stroke-width="0.08" textLength="12.5" lengthAdjust="spacingAndGlyphs">900</text>
<text x="598.8" y="55.2" font-size="9.4" fill="#a02828" stroke="#a02828" stroke-width="0.08" textLength="8.0" lengthAdjust="spacingAndGlyphs">W</text>
<text x="696.4" y="55.2" font-size="9.4" fill="#a02828" stroke="#a02828" stroke-width="0.08" textLength="7.8" lengthAdjust="spacingAndGlyphs">W</text>
<text x="599.0" y="88.7" font-size="9.4" fill="#a02828" stroke="#a02828" stroke-width="0.08" textLength="13.0" lengthAdjust="spacingAndGlyphs">Vdc</text>
<text x="696.7" y="88.7" font-size="9.4" fill="#a02828" stroke="#a02828" stroke-width="0.08" textLength="13.0" lengthAdjust="spacingAndGlyphs">Vdc</text>
<line x1="554" y1="68" x2="687" y2="68" stroke="#34487c" stroke-width="3" stroke-linecap="round"/>
<line x1="554" y1="101.4" x2="687" y2="101.4" stroke="#34487c" stroke-width="3" stroke-linecap="round"/>
<path d="M615.9,71.1 L615.9,66.6 L619.6,63.6 L623.3,66.6 L623.3,71.1 Z" fill="#dce8f8" stroke="#4a6aa8" stroke-width="1"/>
<line x1="619.6" y1="66.1" x2="619.6" y2="69.6" stroke="#4a6aa8" stroke-width="0.8"/>
<path d="M684.3,105.3 L684.3,100.8 L688.0,97.8 L691.7,100.8 L691.7,105.3 Z" fill="#dce8f8" stroke="#4a6aa8" stroke-width="1"/>
<line x1="688.0" y1="100.3" x2="688.0" y2="103.8" stroke="#4a6aa8" stroke-width="0.8"/>
<rect x="0" y="22" width="1" height="511" fill="#4e6590"/>
<rect x="849" y="22" width="1" height="511" fill="#4e6590"/>
<rect x="0" y="532" width="850" height="1" fill="#4e6590"/>
</svg></body></html>
